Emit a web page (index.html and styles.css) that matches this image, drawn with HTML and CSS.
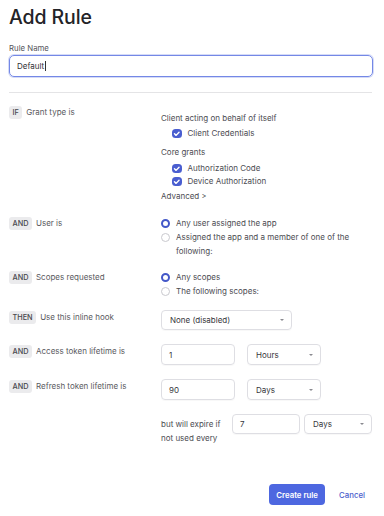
FILE: index.html
```html
<!DOCTYPE html>
<html>
<head>
<meta charset="utf-8">
<link rel="stylesheet" href="styles.css">
</head>
<body>
<div class="dialog">
  <h1 class="title">Add Rule</h1>
  <label class="field-label">Rule Name</label>
  <div class="text-input focused">Default<span class="caret"></span></div>
  <div class="divider"></div>

  <div class="rule-row row-if">
    <div class="cond"><span class="badge">IF</span><span class="cond-text">Grant type is</span></div>
    <div class="value grant">
      <div class="group-head">Client acting on behalf of itself</div>
      <div class="check first"><span class="box"><svg viewBox="0 0 10 10"><path d="M2.6 5.1 L4.3 6.7 L7.4 3.4" fill="none" stroke="#fff" stroke-width="1.5" stroke-linecap="round" stroke-linejoin="round"/></svg></span>Client Credentials</div>
      <div class="group-head core">Core grants</div>
      <div class="check first2"><span class="box"><svg viewBox="0 0 10 10"><path d="M2.6 5.1 L4.3 6.7 L7.4 3.4" fill="none" stroke="#fff" stroke-width="1.5" stroke-linecap="round" stroke-linejoin="round"/></svg></span>Authorization Code</div>
      <div class="check"><span class="box"><svg viewBox="0 0 10 10"><path d="M2.6 5.1 L4.3 6.7 L7.4 3.4" fill="none" stroke="#fff" stroke-width="1.5" stroke-linecap="round" stroke-linejoin="round"/></svg></span>Device Authorization</div>
      <div class="advanced">Advanced <span class="chev">&gt;</span></div>
    </div>
  </div>

  <div class="rule-row row-user">
    <div class="cond"><span class="badge">AND</span><span class="cond-text">User is</span></div>
    <div class="value">
      <div class="radio"><span class="dot on"></span><span>Any user assigned the app</span></div>
      <div class="radio"><span class="dot"></span><span>Assigned the app and a member of one of the following:</span></div>
    </div>
  </div>

  <div class="rule-row row-scopes">
    <div class="cond"><span class="badge">AND</span><span class="cond-text">Scopes requested</span></div>
    <div class="value">
      <div class="radio"><span class="dot on"></span><span>Any scopes</span></div>
      <div class="radio"><span class="dot"></span><span>The following scopes:</span></div>
    </div>
  </div>

  <div class="rule-row row-then">
    <div class="cond"><span class="badge">THEN</span><span class="cond-text">Use this inline hook</span></div>
    <div class="value controls">
      <div class="select wide">None (disabled)<span class="arrow"></span></div>
    </div>
  </div>

  <div class="rule-row row-access">
    <div class="cond"><span class="badge">AND</span><span class="cond-text">Access token lifetime is</span></div>
    <div class="value controls">
      <div class="box-input num">1</div>
      <div class="select unit">Hours<span class="arrow"></span></div>
    </div>
  </div>

  <div class="rule-row row-refresh">
    <div class="cond"><span class="badge">AND</span><span class="cond-text">Refresh token lifetime is</span></div>
    <div class="value controls">
      <div class="box-input num">90</div>
      <div class="select unit">Days<span class="arrow"></span></div>
    </div>
  </div>

  <div class="rule-row row-expire">
    <div class="cond"></div>
    <div class="value controls expire">
      <div class="expire-text">but will expire if not used every</div>
      <div class="box-input num2">7</div>
      <div class="select unit2">Days<span class="arrow"></span></div>
    </div>
  </div>

  <div class="footer">
    <button class="primary">Create rule</button>
    <a class="cancel">Cancel</a>
  </div>
</div>
</body>
</html>
```
FILE: styles.css
```css
* { box-sizing: border-box; }
html, body { margin: 0; padding: 0; background: #fff; }
body {
  font-family: Inter, "Noto Sans", "Liberation Sans", sans-serif;
  font-size: 8px;
  color: #4c4c52;
}
.dialog {
  width: 384px;
  padding: 0 11px 0 9px;
}
.title {
  margin: 0;
  padding-top: 6px;
  font-size: 19.5px;
  line-height: 22px;
  font-weight: 500;
  color: #232327;
  letter-spacing: -0.1px;
}
.field-label {
  display: block;
  margin-top: 15px;
  line-height: 10px;
  font-size: 7.8px;
  color: #55555b;
}
.text-input {
  margin-top: 2px;
  height: 22px;
  width: 364px;
  border-radius: 5px;
  display: flex;
  align-items: center;
  padding-left: 7px;
  color: #2f2f33;
  font-size: 8px;
}
.text-input.focused {
  border: 1.5px solid #7488e6;
  box-shadow: 0 0 0 1px rgba(116, 136, 230, 0.3);
}
.caret {
  display: inline-block;
  width: 1px;
  height: 10px;
  background: #333;
  margin-left: 0.5px;
}
.divider {
  margin-top: 15px;
  height: 1px;
  width: 363px;
  background: #e4e4e6;
}
.rule-row {
  display: grid;
  grid-template-columns: 152px 1fr;
}
.row-if { margin-top: 12px; }
.row-user { margin-top: 12px; }
.row-scopes { margin-top: 12px; }
.row-then { margin-top: 12px; }
.row-access { margin-top: 14px; }
.row-refresh { margin-top: 14px; }
.row-expire { margin-top: 14px; }
.cond {
  display: flex;
  align-items: flex-start;
  gap: 4px;
}
.badge {
  display: inline-block;
  height: 13px;
  line-height: 13px;
  padding: 0 3.5px;
  border-radius: 3px;
  background: #ebebed;
  color: #48484d;
  font-size: 7.3px;
  font-weight: 500;
  margin-top: 1px;
}
.cond-text {
  line-height: 13px;
  margin-top: 1px;
  color: #5a5a60;
}
.value { color: #4c4c52; }
.grant { padding-top: 6px; }
.group-head { line-height: 14px; }
.group-head.core { margin-top: 5px; }
.check {
  display: flex;
  align-items: center;
  gap: 6px;
  padding-left: 11px;
  line-height: 13px;
  height: 13px;
}
.check.first { margin-top: 2px; }
.check.first2 { margin-top: 3px; }
.box {
  width: 9.5px;
  height: 9.5px;
  border-radius: 3.5px;
  background: #4a5ed0;
  display: inline-flex;
}
.box svg { width: 9.5px; height: 9.5px; display: block; }
.advanced { line-height: 14px; margin-top: 1px; }
.chev { font-size: 7.5px; }
.radio {
  display: flex;
  align-items: flex-start;
  gap: 6px;
  line-height: 14px;
  max-width: 200px;
}
.dot {
  flex: none;
  width: 9px;
  height: 9px;
  margin-top: 2.5px;
  border-radius: 50%;
  border: 1px solid #c9c9ce;
  background: #fff;
}
.dot.on {
  border: 2.6px solid #4458c8;
}
.controls {
  display: flex;
  align-items: flex-start;
}
.select, .box-input {
  position: relative;
  height: 21px;
  border: 1px solid #dedee3;
  border-radius: 4px;
  display: flex;
  align-items: center;
  color: #36363b;
  box-shadow: 0 1px 1px rgba(0,0,0,0.03);
}
.select { padding-left: 8px; }
.box-input { padding-left: 7px; }
.select.wide { width: 131px; height: 20px; }
.num { width: 74px; }
.unit { width: 74px; margin-left: 12px; }
.arrow {
  position: absolute;
  right: 7px;
  top: 50%;
  margin-top: -1px;
  width: 0;
  height: 0;
  border-left: 2px solid transparent;
  border-right: 2px solid transparent;
  border-top: 2.5px solid #8a8a90;
}
.expire-text {
  width: 71px;
  line-height: 14px;
  margin-top: 3px;
}
.num2 { width: 68px; height: 20px; }
.unit2 { width: 68px; height: 20px; margin-left: 4px; }
.footer {
  margin-top: 39px;
  display: flex;
  justify-content: flex-end;
  align-items: center;
  gap: 14px;
  padding-right: 8px;
}
.primary {
  height: 21px;
  width: 56px;
  border: none;
  border-radius: 4px;
  background: #4d67e0;
  color: #fff;
  font-family: inherit;
  font-size: 7.8px;
  font-weight: 600;
  padding: 0;
}
.cancel {
  color: #4a5dcc;
  font-weight: 500;
  font-size: 7.8px;
}
```
